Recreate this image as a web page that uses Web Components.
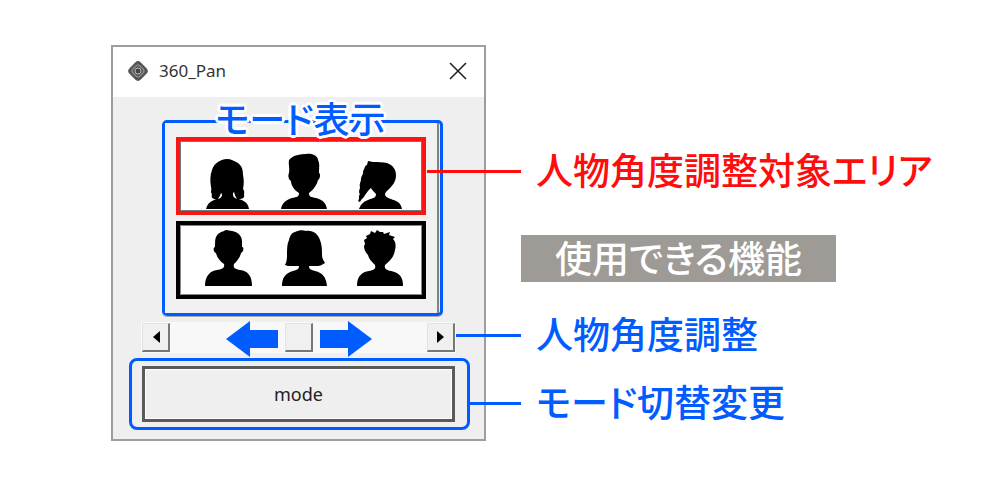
<!DOCTYPE html>
<html lang="ja">
<head>
<meta charset="utf-8">
<meta name="viewport" content="width=device-width, initial-scale=1">
<title>360_Pan</title>
<style>
  body {
    margin: 0;
    background: #fff;
    font-family: "Noto Sans", "Noto Sans CJK JP", sans-serif;
  }
</style>
</head>
<body>
<pan-guide>
  <pan-window slot="window" heading="360_Pan">
    <mode-frame label="モード表示">
      <person-row people="bob,short,ponytail" active></person-row>
      <person-row people="plain,long,spiky"></person-row>
    </mode-frame>
    <angle-slider label="人物角度調整"></angle-slider>
    <mode-button>mode</mode-button>
  </pan-window>
  <call-out color="#ff0c0c" reach="94">人物角度調整対象エリア</call-out>
  <guide-banner>使用できる機能</guide-banner>
  <call-out color="#005cff" reach="65">人物角度調整</call-out>
  <call-out color="#005cff" reach="51">モード切替変更</call-out>
</pan-guide>

<script>
// Head and shoulder silhouettes, all in a 48 x 56 box
const PEOPLE = {
  bob: 'M23 6C27 6 30 8 34 10C38 13 39 17 39 22C40 27 40 31 39 36C41 38 40 40 40 42C41 45 38 46 35 46C37 47 44 48 45 56H2C4 49 8 48 12 46C8 46 7 44 8 41C6 39 8 37 7 34C6 28 6 22 8 17C10 10 17 6 23 6ZM17 40C16 43 15 44 14 46C17 45 18 44 18 41ZM29 40C29 43 29 44 33 46C31 43 31 42 30 39Z',
  short: 'M11 5C15 2 20 1 26 1C32 0 38 3 38 7C40 11 39 15 39 20C41 21 40 26 38 27C37 32 33 37 29 40C29 44 31 44 36 45C43 47 46 50 47 56H1C2 50 6 47 12 45C17 44 19 44 19 40C14 37 11 32 11 28C8 26 8 22 9 20C10 15 8 11 9 7Z',
  ponytail: 'M12 8L17 9C22 9 27 9 31 10C37 12 40 17 40 22C40 28 37 32 34 35C31 38 29 39 29 42C30 45 36 46 40 48C44 50 45 52 46 56H3C5 51 7 49 12 47C17 45 20 45 20 41C18 39 16 37 15 35C12 37 11 40 9 42C8 45 5 46 4 49L2 48C4 45 2 43 4 41C2 39 4 36 4 34C3 31 5 29 5 26C5 23 8 21 7 18C9 16 8 13 11 12Z',
  plain: 'M20 1C22 -1 25 1 28 1C34 2 38 6 38 11V17C40 16 40 22 37 23C36 28 33 31 30 34C29 38 31 39 36 40C44 41 48 46 48 56H1C1 46 6 41 13 40C18 39 21 38 20 34C16 31 13 28 12 23C9 22 9 17 11 17C11 13 11 9 12 7C14 3 17 2 20 1Z',
  long: 'M15 2C19 0 23 0 26 1C33 0 38 4 40 10C42 15 42 20 42 25C42 29 44 31 45 33C42 35 40 36 38 36H29C29 39 31 40 35 41C43 43 46 47 47 56H2C2 47 6 43 13 41C17 40 19 39 19 36H11C9 36 7 36 5 35C7 31 7 28 7 24C7 19 7 14 9 10C10 6 11 3 15 2Z',
  spiky: 'M14 4L15 1L19 3L21 0L24 2L27 2L28 4L34 2L33 5L39 7L37 9C40 12 40 16 39 20C38 27 34 31 29 35C28 39 31 40 35 41C43 43 47 46 47 56H1C1 46 6 42 13 41C18 40 20 39 19 35C15 31 13 29 12 25C9 22 8 19 8 16L9 14L8 10L11 8L10 6Z'
};

class PanGuide extends HTMLElement {
  constructor() {
    super();
    this.attachShadow({ mode: 'open' });
    this.shadowRoot.innerHTML = `
      <style>
        :host { display: block; }
        main {
          display: grid;
          grid-template-columns: minmax(0, 15fr) minmax(0, 17fr);
          gap: 35px;
          align-items: start;
          padding: 45px 54px 48px 111px;
        }
        .notes {
          display: flex;
          flex-direction: column;
          align-items: flex-start;
          gap: 24px;
          padding-top: 102px;
        }
      </style>
      <main>
        <slot name="window"></slot>
        <div class="notes"><slot></slot></div>
      </main>
    `;
  }
}

class PanWindow extends HTMLElement {
  constructor() {
    super();
    this.attachShadow({ mode: 'open' });
  }

  connectedCallback() {
    this.shadowRoot.innerHTML = `
      <style>
        :host {
          display: block;
          border: 2px solid #9d9d9d;
          background: #efefef;
        }
        header {
          display: flex;
          align-items: center;
          gap: 10px;
          padding: 12px 17px 14px 14px;
          background: #fff;
        }
        h1 {
          flex: 1;
          margin: 0;
          font-size: 17px;
          font-weight: 400;
          line-height: 24px;
          color: #333;
        }
        button {
          display: flex;
          padding: 0;
          border: 0;
          background: none;
        }
        .content { padding: 23px 14px 9px 16px; }
      </style>
      <header>
        <svg width="22" height="22" viewBox="0 0 22 22" aria-hidden="true">
          <rect x="3" y="3" width="16" height="16" rx="4" transform="rotate(45 11 11)" fill="#555"/>
          <rect x="6" y="6" width="10" height="10" rx="3" transform="rotate(45 11 11)" fill="none" stroke="#999"/>
          <circle cx="11" cy="11" r="3" fill="#444" stroke="#bbb"/>
        </svg>
        <h1></h1>
        <button type="button" aria-label="閉じる">
          <svg width="18" height="18" viewBox="0 0 18 18" stroke="#222" stroke-width="1.6">
            <path d="M1 1L17 17M17 1L1 17"/>
          </svg>
        </button>
      </header>
      <div class="content"><slot></slot></div>
    `;
    this.shadowRoot.querySelector('h1').textContent = this.getAttribute('heading');
  }
}

class ModeFrame extends HTMLElement {
  constructor() {
    super();
    this.attachShadow({ mode: 'open' });
  }

  connectedCallback() {
    this.shadowRoot.innerHTML = `
      <style>
        :host {
          display: block;
          position: relative;
          margin: 0 27px 0 33px;
          border: 3px solid #005cff;
          border-radius: 5px;
          box-shadow: 0 1px 0 #aaa;
        }
        .panel {
          display: flex;
          flex-direction: column;
          gap: 6px;
          margin-right: 1px;
          padding: 14px 11px;
          border-right: 2px solid #85827c;
          background: #f1f1f1;
        }
        /* Caption sits on top of the frame line */
        .caption {
          position: absolute;
          top: -30px;
          left: 0;
          right: 4px;
          text-align: center;
          white-space: nowrap;
          font: 500 36px/48px "Noto Sans CJK JP", sans-serif;
          font-feature-settings: "palt";
          color: #005cff;
          text-shadow: 3px 0 #fff, -3px 0 #fff, 0 3px #fff, 0 -3px #fff,
            2px 2px #fff, -2px 2px #fff, 2px -2px #fff, -2px -2px #fff;
        }
      </style>
      <div class="panel"><slot></slot></div>
      <div class="caption"></div>
    `;
    this.shadowRoot.querySelector('.caption').textContent = this.getAttribute('label');
  }
}

class PersonRow extends HTMLElement {
  constructor() {
    super();
    this.attachShadow({ mode: 'open' });
  }

  connectedCallback() {
    const people = this.getAttribute('people').split(',');
    this.shadowRoot.innerHTML = `
      <style>
        :host {
          display: flex;
          justify-content: center;
          gap: 28px;
          padding: 5px 0 9px 5px;
          border: 4px solid #000;
          background: #fff;
          box-shadow: inset 0 0 0 1px #888;
        }
        :host([active]) {
          padding: 12px 0 2px 5px;
          border-color: #fa1414;
          box-shadow: inset 0 0 0 1px #6b7a7a;
        }
        svg { display: block; overflow: visible; }
      </style>
      ${people.map((name) => `
        <svg width="48" height="56" viewBox="0 0 48 56" aria-hidden="true"><path d="${PEOPLE[name]}"/></svg>
      `).join('')}
    `;
  }
}

class AngleSlider extends HTMLElement {
  constructor() {
    super();
    this.attachShadow({ mode: 'open' });
  }

  connectedCallback() {
    this.shadowRoot.innerHTML = `
      <style>
        :host {
          display: flex;
          position: relative;
          margin: 6px 14px 5px 12px;
          padding: 1px;
          background: #f8f8f8;
        }
        button {
          display: flex;
          align-items: center;
          justify-content: center;
          width: 28px;
          height: 29px;
          padding: 0;
          border: 1px solid #e3e3e3;
          border-right: 2px solid #777;
          border-bottom: 2px solid #777;
          background: #f0f0f0;
        }
        input {
          -webkit-appearance: none;
          appearance: none;
          flex: 1;
          min-width: 0;
          height: 29px;
          margin: 0;
          background: none;
        }
        input::-webkit-slider-thumb {
          -webkit-appearance: none;
          box-sizing: border-box;
          width: 28px;
          height: 29px;
          border: 1px solid #e3e3e3;
          border-right: 2px solid #777;
          border-bottom: 2px solid #777;
          background: #f0f0f0;
        }
        /* Direction hints drawn over the track */
        .hints {
          position: absolute;
          inset: 0;
          display: flex;
          align-items: center;
          justify-content: center;
          gap: 42px;
          pointer-events: none;
        }
        .hints svg { flex: none; margin-top: 2px; fill: #005cff; }
      </style>
      <button type="button" aria-label="左へ"><svg width="8" height="12"><path d="M8 0V12L1 6Z"/></svg></button>
      <input type="range" min="-180" max="180" value="0">
      <button type="button" aria-label="右へ"><svg width="8" height="12"><path d="M0 0V12L7 6Z"/></svg></button>
      <div class="hints">
        <svg width="52" height="36"><path d="M0 18L24 0V9H52V27H24V36Z"/></svg>
        <svg width="52" height="36"><path d="M52 18L28 0V9H0V27H28V36Z"/></svg>
      </div>
    `;
    this.shadowRoot.querySelector('input').setAttribute('aria-label', this.getAttribute('label'));
  }
}

class ModeButton extends HTMLElement {
  constructor() {
    super();
    this.attachShadow({ mode: 'open' });
    this.shadowRoot.innerHTML = `
      <style>
        :host {
          display: block;
          padding: 5px 12px 5px 10px;
          border: 3px solid #005cff;
          border-radius: 8px;
        }
        button {
          display: block;
          width: 100%;
          height: 56px;
          padding: 0;
          border: 3px solid #5a5a5a;
          background: #efefef;
          box-shadow: inset 0 0 0 1px #fff;
          font: 400 18px/24px "Noto Sans", sans-serif;
          color: #222;
        }
      </style>
      <button type="button"><slot></slot></button>
    `;
  }
}

class CallOut extends HTMLElement {
  constructor() {
    super();
    this.attachShadow({ mode: 'open' });
  }

  connectedCallback() {
    const color = this.getAttribute('color') || '#005cff';
    const reach = this.getAttribute('reach') || '50'; // Leader line length
    this.shadowRoot.innerHTML = `
      <style>
        :host {
          display: block;
          position: relative;
          padding-left: 15px;
          font: 500 37px/44px "Noto Sans CJK JP", sans-serif;
          font-feature-settings: "palt";
          white-space: nowrap;
          color: ${color};
        }
        /* Leader line runs back over the window */
        :host::before {
          content: "";
          position: absolute;
          top: 23px;
          right: 100%;
          width: ${reach}px;
          height: 3px;
          background: ${color};
        }
      </style>
      <slot></slot>
    `;
  }
}

class GuideBanner extends HTMLElement {
  constructor() {
    super();
    this.attachShadow({ mode: 'open' });
    this.shadowRoot.innerHTML = `
      <style>
        :host {
          display: block;
          margin: 20px 0 5px;
          padding: 0 34px 3px;
          background: #9e9a96;
          font: 500 37px/44px "Noto Sans CJK JP", sans-serif;
          font-feature-settings: "palt";
          white-space: nowrap;
          color: #fff;
        }
      </style>
      <slot></slot>
    `;
  }
}

customElements.define('pan-guide', PanGuide);
customElements.define('pan-window', PanWindow);
customElements.define('mode-frame', ModeFrame);
customElements.define('person-row', PersonRow);
customElements.define('angle-slider', AngleSlider);
customElements.define('mode-button', ModeButton);
customElements.define('call-out', CallOut);
customElements.define('guide-banner', GuideBanner);
</script>
</body>
</html>
